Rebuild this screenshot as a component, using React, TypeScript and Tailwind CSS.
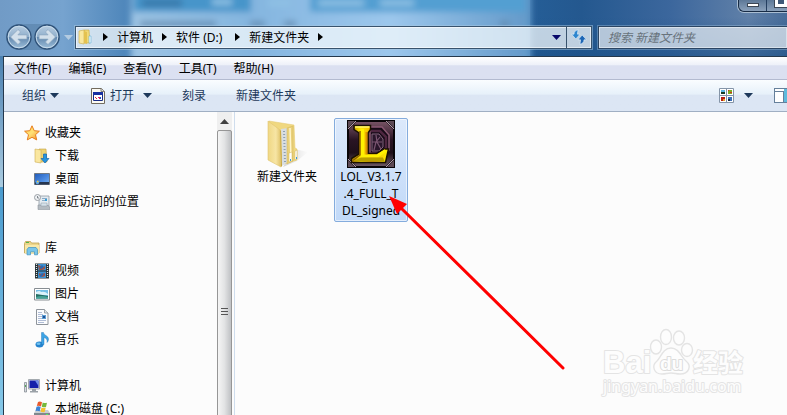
import React from "react";

type IconProps = { className?: string };

function Caret({ className = "" }: IconProps) {
  return (
    <svg className={`h-[5px] w-[9px] shrink-0 ${className}`} viewBox="0 0 9 5" fill="currentColor" aria-hidden="true">
      <path d="M0 0h9L4.5 5z" />
    </svg>
  );
}

function Chevron() {
  return (
    <svg className="h-2 w-[5px] shrink-0 text-black" viewBox="0 0 5 8" fill="currentColor" aria-hidden="true">
      <path d="M0 0l5 4-5 4z" />
    </svg>
  );
}

function Backdrop() {
  return (
    <svg className="absolute inset-x-0 top-0 h-14 w-full" viewBox="0 0 787 56" preserveAspectRatio="none" aria-hidden="true">
      <defs>
        <linearGradient id="glassLeft" x1="0" y1="0" x2="1" y2="0">
          <stop offset="0" stopColor="#719bc6" />
          <stop offset="0.08" stopColor="#76a3cf" />
          <stop offset="0.17" stopColor="#4a83b8" />
          <stop offset="1" stopColor="#3d79b0" />
        </linearGradient>
        <linearGradient id="glassMid" x1="0" y1="0" x2="1" y2="0">
          <stop offset="0" stopColor="#9dc4e4" />
          <stop offset="0.3" stopColor="#84b5df" />
          <stop offset="0.65" stopColor="#9cc7ec" />
          <stop offset="1" stopColor="#6399c9" />
        </linearGradient>
        <linearGradient id="glassRight" x1="0" y1="0" x2="1" y2="0">
          <stop offset="0" stopColor="#255e97" />
          <stop offset="0.2" stopColor="#24588f" />
          <stop offset="0.55" stopColor="#3c679d" />
          <stop offset="0.85" stopColor="#6080a8" />
          <stop offset="1" stopColor="#486c99" />
        </linearGradient>
        <linearGradient id="glassLow" x1="0" y1="0" x2="0" y2="1">
          <stop offset="0.3" stopColor="#1c5288" stopOpacity="0" />
          <stop offset="1" stopColor="#1c5288" stopOpacity="0.6" />
        </linearGradient>
        <filter id="soft" x="-10%" y="-60%" width="120%" height="220%">
          <feGaussianBlur stdDeviation="3" />
        </filter>
      </defs>
      <rect width="787" height="56" fill="url(#glassLeft)" />
      <rect x="530" width="257" height="56" fill="url(#glassRight)" />
      <rect x="530" width="257" height="56" fill="url(#glassLow)" />
      <g filter="url(#soft)">
        <rect x="131" y="-10" width="400" height="80" fill="url(#glassMid)" />
        <rect x="133" y="-12" width="118" height="24" fill="#4795ca" />
        <rect x="310" y="-12" width="216" height="24" fill="#529fd2" />
        <rect x="142" y="-1" width="40" height="8" fill="#356f9f" opacity="0.7" />
        <path d="M212 2h20M268 3h22M318 3h46M380 3h34" stroke="#8fc1e4" strokeWidth="6" />
        <path d="M140 24h76M250 24h15M284 24h12M500 24h9" stroke="#5f88ad" strokeWidth="6" opacity="0.8" />
      </g>
    </svg>
  );
}

function SmallFolder() {
  return (
    <svg className="h-4 w-4 shrink-0" viewBox="0 0 16 16" aria-hidden="true">
      <path d="M6 1h5l1 13H6z" fill="#f0d978" stroke="#c9a944" strokeWidth="0.6" />
      <path d="M1 2l5-1v14l-5-1z" fill="#f9e89f" stroke="#cfac48" strokeWidth="0.6" />
      <path d="M6 2l3 1v12l-3-1z" fill="#e4c250" />
      <path d="M11 7h2v7h-2z" fill="#e8f5fb" stroke="#5ba9d1" strokeWidth="0.5" />
    </svg>
  );
}

function NavArrow({ forward = false }: { forward?: boolean }) {
  return (
    <svg className={`h-[26px] w-[26px] ${forward ? "rotate-180" : ""}`} viewBox="0 0 26 26" aria-hidden="true">
      <defs>
        <linearGradient id={forward ? "orbF" : "orbB"} x1="0" y1={forward ? "1" : "0"} x2="0" y2={forward ? "0" : "1"}>
          <stop offset="0" stopColor="#b9cee1" />
          <stop offset="0.48" stopColor="#91b0cd" />
          <stop offset="0.52" stopColor="#6388ae" />
          <stop offset="1" stopColor="#9fc1dc" />
        </linearGradient>
      </defs>
      <circle cx="13" cy="13" r="12" fill={forward ? "url(#orbF)" : "url(#orbB)"} stroke="#2f5279" strokeWidth="1.4" />
      <circle cx="13" cy="13" r="10.8" fill="none" stroke="#c9dceb" strokeWidth="1" />
      <path d="M4.500 13l7.500-7.500 2.600 2.400-2.700 3h9v4.200h-9l2.700 3-2.600 2.400z" fill="#d3e0eb" stroke="#8ba6c0" strokeWidth="0.7" />
    </svg>
  );
}

function RefreshIcon() {
  return (
    <svg className="h-4 w-4" viewBox="0 0 16 16" aria-hidden="true">
      <path d="M7.500 1C4.500 1 3 2.600 3 5.200H.6L4.800 10 9 5.200H6.500C6.500 3.300 6.700 2 7.500 1z" fill="#2e86ce" stroke="#e6f5ff" strokeWidth="0.6" />
      <path d="M8.500 15c3 0 4.500-1.600 4.500-4.200h2.400L11.200 6 7 10.800h2.500c0 1.900-.2 3.200-1 4.200z" fill="#1d66b5" stroke="#e6f5ff" strokeWidth="0.6" />
    </svg>
  );
}

function AppIcon() {
  return (
    <svg className="h-4 w-[14px] shrink-0" viewBox="0 0 14 16" aria-hidden="true">
      <path d="M.5.5h10l3 3v12H.5z" fill="#fbfaf3" stroke="#716b5e" />
      <path d="M10 .5v3h3.500" fill="#ddd" stroke="#716b5e" strokeWidth="0.8" />
      <path d="M2.500 4.500h9v8h-9z" fill="#fff" stroke="#172a84" />
      <path d="M2 4h10v3H2z" fill="#1730a0" />
      <path d="M4 9h1v1H4zM5 10h1v1H5z" fill="#d92a2a" />
      <path d="M7 9h3v1H7zM8 10h2v1H8z" fill="#d92a6a" />
      <path d="M9 9h1v2H9z" fill="#2450c7" />
    </svg>
  );
}

function ViewIcon() {
  return (
    <svg className="h-[15px] w-[15px]" viewBox="0 0 15 15" aria-hidden="true">
      <path d="M.5.500h14v14H.5zM7.500.500v14M.5 7.500h14" fill="#fff" stroke="#8495a8" />
      <path d="M2 2h4v3H2z" fill="#58b5e2" />
      <path d="M2 4h4v2H2z" fill="#173a25" />
      <path d="M9 2h4v4H9z" fill="#7dab20" />
      <path d="M9 2h1v1H9zM11 4h2v1h-2z" fill="#d12e1d" />
      <path d="M2 9h4v4H2z" fill="#b51f12" />
      <path d="M4 11h2v2H4z" fill="#e5a12a" />
      <path d="M9 9h4v4H9z" fill="#3c6fb7" />
      <path d="M9 11h2v2H9z" fill="#142742" />
    </svg>
  );
}

function StarIcon() {
  return (
    <svg viewBox="0 0 16 16" className="h-4 w-4" aria-hidden="true">
      <defs>
        <linearGradient id="star" x1="0" y1="0" x2="1" y2="1">
          <stop offset="0" stopColor="#ffdb57" />
          <stop offset="0.5" stopColor="#ffdf75" />
          <stop offset="1" stopColor="#f38a20" />
        </linearGradient>
      </defs>
      <path d="M8 .8l2.200 4.900 5.200.5-3.900 3.500 1.200 5.200L8 12.300l-4.700 2.600 1.200-5.200L.6 6.200l5.200-.5z" fill="url(#star)" stroke="#e77c1c" />
    </svg>
  );
}

function DownloadIcon() {
  return (
    <svg viewBox="0 0 16 16" className="h-4 w-4" aria-hidden="true">
      <path d="M5 1h7l1 13H5z" fill="#edd373" stroke="#c5a144" strokeWidth="0.6" />
      <path d="M1 1l6 1v13l-6-1z" fill="#fae7a0" stroke="#cdac50" strokeWidth="0.6" />
      <path d="M9.500 6h3v4.500H15l-4 4.500-4-4.500h2.500z" fill="#2594df" stroke="#1267b2" strokeWidth="0.7" />
    </svg>
  );
}

function DesktopIcon() {
  return (
    <svg viewBox="0 0 16 16" className="h-4 w-4" aria-hidden="true">
      <defs>
        <linearGradient id="desk" x1="0" y1="0" x2="1" y2="1">
          <stop offset="0" stopColor="#205ab9" />
          <stop offset="0.6" stopColor="#4d8ce2" />
          <stop offset="1" stopColor="#7bb4f1" />
        </linearGradient>
      </defs>
      <path d="M.500 2.500h15v11H.500z" fill="url(#desk)" stroke="#707983" />
      <path d="M1 11h14v2.500H1z" fill="#26354f" />
      <circle cx="3.400" cy="11.500" r="1.800" fill="#5aa7e8" />
      <path d="M3 9.800h1.500v1.500H3z" fill="#f1c83f" />
    </svg>
  );
}

function RecentIcon() {
  return (
    <svg viewBox="0 0 16 16" className="h-4 w-4" aria-hidden="true">
      <path d="M5 2h10v10H5z" fill="#e3ebf1" stroke="#909ba5" strokeWidth="0.8" />
      <path d="M8 4h5v1H8zM8 6h3v1H8z" fill="#8aabc7" />
      <path d="M11 5h2v2h-2z" fill="#38a0d8" />
      <circle cx="3.500" cy="3.500" r="3" fill="#eef1f3" stroke="#9a9fa5" />
      <path d="M3.500 2v2h1.500" fill="none" stroke="#586069" strokeWidth="0.7" />
      <path d="M4 11h9l3 2v2.500H4z" fill="#b4bbc1" stroke="#8e969e" strokeWidth="0.6" />
      <path d="M7 9h6v3H7z" fill="#d6e2ea" stroke="#8d9ba6" strokeWidth="0.5" />
    </svg>
  );
}

function LibraryIcon() {
  return (
    <svg viewBox="0 0 16 16" className="h-4 w-4" aria-hidden="true">
      <path d="M.5 3.500l1-2h5l1 1.500h7.500v10H.5z" fill="#ecd58a" stroke="#bfa04e" strokeWidth="0.8" />
      <path d="M1 5h14v8.500H1z" fill="#f8e8a8" />
      <path d="M2 2h3v1H2z" fill="#54b548" />
      <path d="M3 14.800V9.500L4.500 7.500h7.500L13.500 9.500v5.300h-3v-3h-4v3z" fill="#79c5ea" stroke="#3e91bf" strokeWidth="0.7" />
    </svg>
  );
}

function VideoIcon() {
  return (
    <svg viewBox="0 0 16 16" className="h-4 w-4" aria-hidden="true">
      <path d="M1 .5h14v15H1z" fill="#273236" />
      <path d="M4 1h8v6.500H4zM4 8.500h8V15H4z" fill="#3c91d1" />
      <path d="M4 2l3 1 1 2 3-2v3L8 7H5zM5 10l2 1 4-1v3l-3 1-3-2z" fill="#9f5446" />
      <path d="M5 5l3-3 2 2-3 2zM5 13l3-3 2 1-3 3z" fill="#2a68b0" />
      <path d="M2.500 1v14M13.500 1v14" stroke="#dce7e8" strokeWidth="1.200" strokeDasharray="1 1" />
    </svg>
  );
}

function PictureIcon() {
  return (
    <svg viewBox="0 0 16 16" className="h-4 w-4" aria-hidden="true">
      <path d="M.5 2.500h15v11.500H.5z" fill="#fff" stroke="#878d92" />
      <path d="M2 4h12v8.500H2z" fill="#73bee6" />
      <path d="M2 6q4-2 5 0 4-1 7 2v1H2z" fill="#daf2fb" />
      <path d="M2 8q7 1 12 2v2.500H2z" fill="#236e64" />
      <path d="M2 11q5-2 12 0v1.500H2z" fill="#46a296" />
    </svg>
  );
}

function DocumentIcon() {
  return (
    <svg viewBox="0 0 16 16" className="h-4 w-4" aria-hidden="true">
      <path d="M2.500.5h8l3.500 3.500v11.500H2.500z" fill="#fbfcfe" stroke="#8e949b" />
      <path d="M10.500.5v3.500H14" fill="#dfe3e7" stroke="#8e949b" strokeWidth="0.8" />
      <path d="M4 3.500h4M4 5.500h5M4 7.500h4M4 9.500h4M4 11.500h8M4 13.500h6" stroke="#9daccb" strokeWidth="0.8" />
      <path d="M8 6h4v4H8z" fill="#5b9fd6" />
      <path d="M9 7h2v2H9z" fill="#224f92" />
    </svg>
  );
}

function MusicIcon() {
  return (
    <svg viewBox="0 0 16 16" className="h-4 w-4" aria-hidden="true">
      <ellipse cx="5.500" cy="12.500" rx="4" ry="3" fill="#2583ce" />
      <ellipse cx="4.500" cy="11.800" rx="2" ry="1.300" fill="#70c1ef" />
      <path d="M7.500.5h2c0 3 5 3 5 6.500 0 1.500-.5 2.500-1.500 3.500.5-3-.5-4-3-5v7H7.500z" fill="#3ca4e5" stroke="#1d6db1" strokeWidth="0.4" />
    </svg>
  );
}

function ComputerIcon() {
  return (
    <svg viewBox="0 0 16 16" className="h-4 w-4" aria-hidden="true">
      <path d="M.5 4.500h2V14h-2z" fill="#d7dce0" stroke="#7b8389" strokeWidth="0.7" />
      <path d="M1 7h1v2H1z" fill="#54a85a" />
      <path d="M4.500 1.500h11v9.500h-11z" fill="#dde1e5" stroke="#a4aaaf" />
      <path d="M5.500 2.500h9v7.500h-9z" fill="#1421aa" />
      <path d="M11 2.500h3.500V8z" fill="#7392e7" />
      <path d="M8 11h4v2h2v1.500H6V13h2z" fill="#9ba2a8" />
    </svg>
  );
}

function DiskIcon() {
  return (
    <svg viewBox="0 0 16 16" className="h-4 w-4" aria-hidden="true">
      <path d="M2 9h12l2 3H0z" fill="#c8cfd3" />
      <path d="M0 12h16v4H0z" fill="#7f898d" />
      <path d="M12 13h2v1h-2z" fill="#4df05a" />
      <path d="M4 1q2-1 4 .3L7 5.500Q5 4.500 2.800 5z" fill="#e85a2c" />
      <path d="M8.700 1.500q2 1 4.300.3L12 6q-2 .8-4.200-.3z" fill="#75b93c" />
      <path d="M2.500 5.800q2-1 4.200.3l-1 4.200q-2-1-4.200-.3z" fill="#3c83d5" />
      <path d="M7.500 6.400q2 1 4.200.3l-1 4.200q-2 .8-4.200-.3z" fill="#f4c131" />
    </svg>
  );
}

function LargeFolder() {
  return (
    <svg className="h-12 w-12" viewBox="0 0 48 48" aria-hidden="true">
      <defs>
        <linearGradient id="folderFront" x1="0" y1="0" x2="1" y2="0">
          <stop offset="0" stopColor="#efd783" />
          <stop offset="0.6" stopColor="#f7e5a4" />
          <stop offset="1" stopColor="#dfc268" />
        </linearGradient>
        <linearGradient id="folderShade" x1="0" y1="0" x2="1" y2="0">
          <stop offset="0" stopColor="#999" stopOpacity="0.4" />
          <stop offset="1" stopColor="#999" stopOpacity="0" />
        </linearGradient>
      </defs>
      <path d="M31 29l14 3-11 9-14 6z" fill="url(#folderShade)" />
      <path d="M6 1l25 4 1 23 2 1v11l-13 4z" fill="#f0d880" stroke="#e2c66d" strokeWidth="0.5" />
      <path d="M18 9l7-1 1 33-7 5z" fill="#d8dde0" />
      <path d="M21 11l1 31" stroke="#8e9eaf" strokeWidth="2" strokeDasharray="1 2" />
      <path d="M24 8l6-2v35l-6 3z" fill="#e9d07a" stroke="#d3b75c" strokeWidth="0.5" />
      <path d="M27 8l1 33" stroke="#fff5cb" strokeWidth="1.500" />
      <path d="M5 1l12 9 1 37L5 40z" fill="url(#folderFront)" stroke="#dfc46f" strokeWidth="0.6" />
      <path d="M17 10l1 1 1 35-1 1z" fill="#c9a740" />
      <path d="M26 33l3-1v9l-3 1zM32 31l2-1v9l-2 1z" fill="#fff" stroke="#d2b450" strokeWidth="0.5" />
      <path d="M27 39h1v2h-1zM33 37h1v2h-1z" fill="#3b9bd6" />
    </svg>
  );
}

function LeagueIcon() {
  return (
    <svg className="h-12 w-12" viewBox="0 0 48 48" aria-hidden="true">
      <defs>
        <linearGradient id="gold" x1="0" y1="0" x2="1" y2="0">
          <stop offset="0" stopColor="#b98500" />
          <stop offset="0.25" stopColor="#ffe600" />
          <stop offset="0.55" stopColor="#f0b400" />
          <stop offset="1" stopColor="#fff000" />
        </linearGradient>
        <linearGradient id="plate" x1="0" y1="0" x2="0" y2="1">
          <stop offset="0" stopColor="#765264" />
          <stop offset="0.4" stopColor="#2a1524" />
          <stop offset="0.7" stopColor="#1e1019" />
          <stop offset="1" stopColor="#6a5662" />
        </linearGradient>
      </defs>
      <path d="M0 0h48v48H0z" fill="#080508" />
      <path d="M9 2h30l7 7v30l-7 7H9l-7-7V9z" fill="url(#plate)" />
      <path d="M1 1h7L1 8zM40 1h7v7zM1 40l7 7H1zM47 40v7h-7z" fill="#5d4a56" />
      <path d="M9 1L1 9M39 1l8 8M1 39l8 8M47 39l-8 8" stroke="#b09aa8" strokeWidth="1" />
      <path d="M23 7h12l7 8v15l-7 6H23z" fill="#160a16" stroke="#8a5873" strokeWidth="1.500" />
      <path d="M24 11h9l6 6v11l-6 5h-9" fill="none" stroke="#4e2640" strokeWidth="2.500" />
      <path d="M25 14h7l4 5v8l-4 4h-7z" fill="#29162a" stroke="#83647c" strokeWidth="1" />
      <path d="M25 22h10M29 15l1 7 4 7M33 17l-4 5-2 8" stroke="#7a5570" strokeWidth="1.200" fill="none" />
      <path d="M7 5.500h16.500v4L21 13v20.500h8.500L37 29h4.500l-3 13.500H4.500v-4L12 34V13L7 9.500z" fill="url(#gold)" stroke="#1c1200" strokeWidth="1.500" />
      <path d="M13 11v24l-7 5.500" fill="none" stroke="#8a5f00" strokeWidth="1.500" />
      <path d="M15.500 9v27h15l8-5.500" fill="none" stroke="#fff200" strokeWidth="3" />
      <path d="M19.500 12v22.500" stroke="#dc9100" strokeWidth="2" />
      <path d="M8 7h14.500" stroke="#fff56b" strokeWidth="1.500" />
      <path d="M6 41l8-3.500h22l1.500 3.500z" fill="#b9a000" />
    </svg>
  );
}

const groups = [
  {
    name: "收藏夹",
    Icon: StarIcon,
    items: [
      { name: "下载", Icon: DownloadIcon },
      { name: "桌面", Icon: DesktopIcon },
      { name: "最近访问的位置", Icon: RecentIcon },
    ],
  },
  {
    name: "库",
    Icon: LibraryIcon,
    items: [
      { name: "视频", Icon: VideoIcon },
      { name: "图片", Icon: PictureIcon },
      { name: "文档", Icon: DocumentIcon },
      { name: "音乐", Icon: MusicIcon },
    ],
  },
  {
    name: "计算机",
    Icon: ComputerIcon,
    items: [{ name: "本地磁盘 (C:)", Icon: DiskIcon }],
  },
];

function TitleBar() {
  return (
    <header className="relative h-14 shrink-0 overflow-hidden">
      <Backdrop />
      <div className="relative flex h-[25px] items-start justify-end">
        <div className="flex h-3 rounded-bl-md border-b border-l border-[#172b45] bg-[#7891ae] shadow-[0_0_0_1px_#a9bdd2]">
          <button aria-label="最小化" className="flex w-7 items-start justify-center rounded-bl-md border-r border-[#253f60] bg-linear-to-b from-[#5d7897] to-[#8ba1bb] pt-[3px]">
            <span className="h-1 w-3 border border-[#3c4755] bg-white" />
          </button>
          <button aria-label="最大化" className="flex w-5 items-start justify-end bg-linear-to-b from-[#5d7897] to-[#8ba1bb]">
            <span className="h-[7px] w-3 border-[3px] border-t-0 border-white bg-[#3f5877] outline outline-[#3c4755]" />
          </button>
        </div>
      </div>
      <div className="relative flex h-6 items-center">
        <div className="ml-1.5 flex w-[69px] shrink-0 items-center">
          <div className="flex gap-0.5 rounded-full bg-[#52799f]/50">
            <button aria-label="后退"><NavArrow /></button>
            <button aria-label="前进"><NavArrow forward /></button>
          </div>
          <button aria-label="最近浏览" className="ml-1 text-[#b3cbe1]"><Caret className="w-[7px]" /></button>
        </div>
        <nav aria-label="地址" className="flex h-[23px] min-w-0 flex-1 items-center border border-[#38536d] bg-[#f4f9fc]/75 shadow-[0_0_0_1px_#a8c8e280] inset-shadow-[0_0_0_1px_#ffffff90]">
          <div className="ml-0.5 flex items-center gap-[9px]">
            <SmallFolder />
            <Chevron />
            <button>计算机</button>
            <Chevron />
            <button className="pr-1">软件 (D:)</button>
            <Chevron />
            <button>新建文件夹</button>
            <Chevron />
          </div>
          <button aria-label="历史地址" className="mr-[5px] ml-auto text-[#08086a]"><Caret /></button>
          <button aria-label="刷新" className="flex h-full w-[25px] items-center justify-center border-l border-[#38536d]"><RefreshIcon /></button>
        </nav>
        <input
          type="search"
          aria-label="搜索 新建文件夹"
          placeholder="搜索 新建文件夹"
          className="ml-1.5 h-[23px] w-[189px] shrink-0 border border-r-0 border-[#2b4563] bg-[#e4ebf1]/75 px-[9px] italic shadow-[0_0_0_1px_#a8c8e260] outline-none inset-shadow-[0_0_0_1px_#ffffff70] placeholder:text-[#68737c]"
        />
      </div>
    </header>
  );
}

function Sidebar() {
  return (
    <aside className="flex w-[231px] shrink-0 overflow-hidden border-r border-[#cfdded]">
      <nav aria-label="导航窗格" className="flex flex-1 flex-col gap-[23px] pt-[9px] pl-5">
        {groups.map(({ name, Icon, items }) => (
          <section key={name}>
            <a href="#" className="flex h-[23px] items-center gap-[5px]"><Icon />{name}</a>
            <ul className="pl-2.5">
              {items.map(({ name: label, Icon: ItemIcon }) => (
                <li key={label}>
                  <a href="#" className="flex h-[23px] items-center gap-[5px] whitespace-nowrap"><ItemIcon />{label}</a>
                </li>
              ))}
            </ul>
          </section>
        ))}
      </nav>
      <div className="mr-0.5 flex w-[15px] shrink-0 flex-col bg-[#efefef]" aria-hidden="true">
        <div className="flex h-[18px] shrink-0 items-center justify-center text-[#404040]"><Caret className="h-1 w-[7px] rotate-180" /></div>
        <div className="flex h-[362px] shrink-0 flex-col items-center justify-center gap-0.5 rounded-xs border border-[#969696] bg-linear-to-r from-[#f5f5f5] via-[#e2e3e4] to-[#bfc1c4]">
          <span className="h-px w-[7px] bg-[#555]" />
          <span className="h-px w-[7px] bg-[#555]" />
          <span className="h-px w-[7px] bg-[#555]" />
        </div>
      </div>
    </aside>
  );
}

function Watermark() {
  return (
    <div className="pointer-events-none absolute right-[42px] bottom-[17px]">
      <svg className="h-[68px] w-[142px] overflow-visible" viewBox="0 0 142 68" fill="#fdfdfd" stroke="#e4e4e4" strokeLinejoin="round">
        <g strokeWidth="1.400">
          <ellipse cx="53" cy="17" rx="5.500" ry="7" />
          <ellipse cx="63" cy="7" rx="5.500" ry="7.500" />
          <ellipse cx="76" cy="8" rx="5.500" ry="7" />
          <ellipse cx="84" cy="20" rx="5.500" ry="6.500" />
          <path d="M68 18c-8 0-10 9-14 13-6 5-3 13 5 13 4 0 5-1 9-1s5 1 9 1c9 0 12-8 6-13-5-4-7-13-15-13z" />
        </g>
        <g paintOrder="stroke" strokeWidth="2">
          <text x="0" y="43" fontFamily="Liberation Sans, sans-serif" fontWeight="700" fontSize="31">Bai</text>
          <text x="57" y="40" fontFamily="Liberation Sans, sans-serif" fontWeight="700" fontSize="19" stroke="#dcdcdc">du</text>
          <text x="90" y="42" fontFamily="Noto Sans CJK SC, sans-serif" fontWeight="700" fontSize="25">经验</text>
          <text x="0" y="62" fontFamily="Noto Sans, sans-serif" fontSize="16">jingyan.baidu.com</text>
        </g>
      </svg>
    </div>
  );
}

export default function App() {
  return (
    <div className="relative flex h-screen flex-col overflow-hidden bg-[#5fa8d4] font-['Noto_Sans','Noto_Sans_CJK_SC',sans-serif] text-[12px] leading-[17px] text-black">
      <TitleBar />
      <div className="flex min-h-0 flex-1 bg-linear-to-b from-[#4a80b0] from-0% via-[#a9cbe0] via-36% to-[#8ccbea]">
        <div className="flex w-[3px] shrink-0 flex-col">
          <div className="h-[131px] shrink-0" />
          <div className="flex-1 bg-linear-to-b from-[#4a9bce] to-[#86c8e8]" />
        </div>
        <div className="flex min-w-0 flex-1 flex-col border-t border-l border-[#24384c] bg-[#fcfcfc]">
          <div role="menubar" className="flex h-[23px] shrink-0 items-center gap-[17px] border-b border-[#b3bad0] bg-linear-to-b from-white from-0% via-[#eef1f9] via-35% to-[#dbe0f1] to-40% pl-2.5">
            <button role="menuitem">文件(F)</button>
            <button role="menuitem">编辑(E)</button>
            <button role="menuitem">查看(V)</button>
            <button role="menuitem">工具(T)</button>
            <button role="menuitem">帮助(H)</button>
          </div>
          <div role="toolbar" aria-label="工具栏" className="flex h-8 shrink-0 items-center border-b border-[#a0afc3] bg-linear-to-b from-[#fafdff] from-0% via-[#e7f1fa] via-45% to-[#dce6f4] to-50% pl-[18px] text-[#1e395b]">
            <button className="flex items-center gap-1">组织<Caret /></button>
            <button className="ml-8 flex items-center gap-[5px]"><AppIcon />打开</button>
            <button aria-label="打开方式" className="ml-[9px]"><Caret /></button>
            <button className="ml-[30px]">刻录</button>
            <button className="ml-[30px]">新建文件夹</button>
            <button aria-label="更改视图" className="ml-auto"><ViewIcon /></button>
            <button aria-label="更多视图选项" className="ml-2.5"><Caret /></button>
            <button aria-label="预览窗格" className="ml-[21px] flex h-[15px] w-[13px] border border-r-0 border-[#66809b] bg-white">
              <span className="mt-0.5 h-[11px] w-[9px] border-t border-r border-[#66809b]" />
              <span className="h-full flex-1 bg-[#5ebbdd]" />
            </button>
          </div>
          <div className="flex min-h-0 flex-1">
            <Sidebar />
            <main className="flex min-w-0 flex-1 items-start gap-2.5 overflow-hidden pt-1.5 pl-[15px]">
              <button className="flex w-[74px] flex-col items-center border border-transparent pt-px"><LargeFolder /><span className="whitespace-nowrap">新建文件夹</span></button>
              <button className="flex w-[74px] flex-col items-center rounded-xs border border-[#84acdd] bg-linear-to-b from-[#dce9fb] to-[#c1d9f8] px-1 pt-px pb-0.5 inset-shadow-[0_0_0_1px_#ffffff90]">
                <LeagueIcon />
                <span className="break-all">LOL_V3.1.7<br />.4_FULL_T<br />DL_signed</span>
              </button>
            </main>
          </div>
        </div>
      </div>
      <svg className="pointer-events-none absolute top-[196px] left-[389px] h-[174px] w-[176px]" viewBox="0 0 176 174" aria-hidden="true">
        <path d="M10 10l164 162" stroke="#ff0000" strokeWidth="3" strokeLinecap="round" />
        <path d="M0 0l18 8-10 10z" fill="#ff0000" />
      </svg>
      <Watermark />
    </div>
  );
}
